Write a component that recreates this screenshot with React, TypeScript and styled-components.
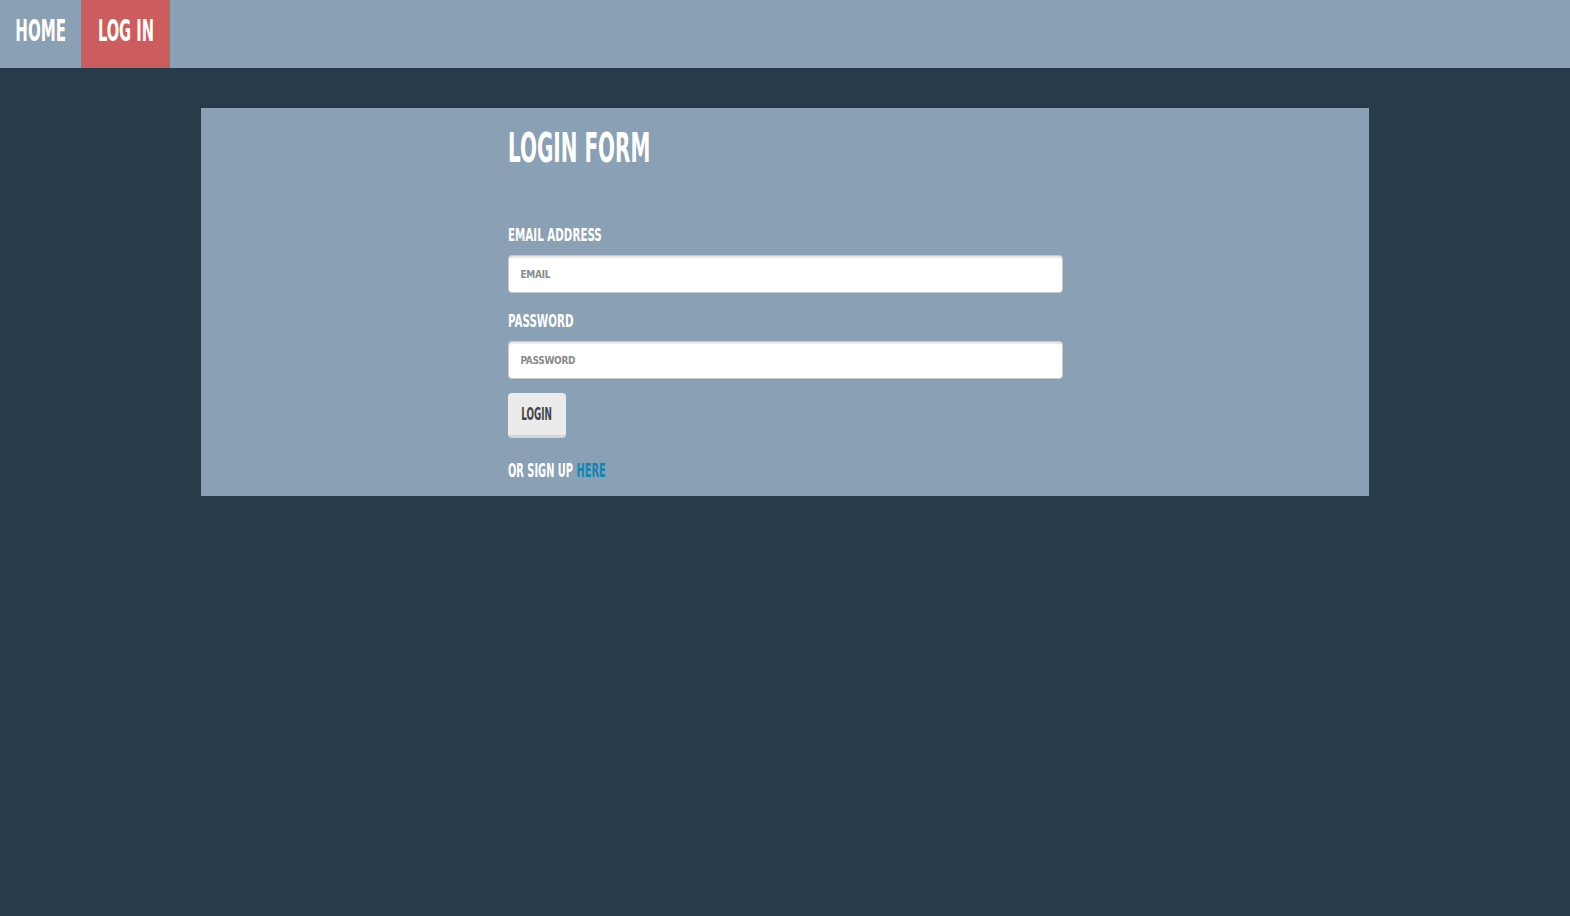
import React from "react";
import styled, { createGlobalStyle } from "styled-components";

const FONT = `"DejaVu Sans Condensed", "DejaVu Sans", sans-serif`;

const Global = createGlobalStyle`
  html, body { margin: 0; padding: 0; background: #283b4b; }
  body { font-family: ${FONT}; min-height: 916px; }
  * { box-sizing: border-box; }
`;

const Page = styled.div`
  min-height: 916px;
  background: #283b4b;
  display: flex;
  flex-direction: column;
`;

const NavBar = styled.nav`
  height: 68px;
  background: #8aa0b5;
  display: flex;
`;

const NavLink = styled.a<{ $w: number; $active?: boolean }>`
  width: ${(p) => p.$w}px;
  height: 68px;
  padding-top: 16px;
  display: flex;
  justify-content: center;
  align-items: flex-start;
  background: ${(p) => (p.$active ? "#cd5c5e" : "transparent")};
  color: #fff;
  text-decoration: none;
  font-weight: 700;
  font-size: 30.2px;
  line-height: 30.2px;
  cursor: pointer;
`;

const Squeeze = styled.span<{ $s?: number; $origin?: string }>`
  display: inline-block;
  white-space: nowrap;
  transform: scaleX(${(p) => p.$s ?? 0.57});
  transform-origin: ${(p) => p.$origin ?? "left center"};
`;

const Card = styled.main`
  width: 1168px;
  margin: 40px auto 0;
  background: #8aa0b5;
  padding: 18px 0 14px;
  display: flex;
  justify-content: center;
`;

const Column = styled.form`
  width: 555px;
  display: flex;
  flex-direction: column;
  align-items: flex-start;
`;

const Title = styled.h1`
  margin: 0 0 55px;
  color: #fff;
  font-size: 40px;
  line-height: 44px;
  font-weight: 700;
`;

const Label = styled.label`
  display: block;
  color: #fff;
  font-size: 18.5px;
  line-height: 20px;
  font-weight: 700;
  margin-bottom: 10px;
`;

const Input = styled.input`
  width: 555px;
  height: 38px;
  border: 1px solid #c9c9c9;
  border-radius: 4px;
  background: #fff;
  box-shadow: inset 0 2px 1px rgba(0, 0, 0, 0.09);
  padding: 0 12px;
  font-family: ${FONT};
  font-weight: 700;
  font-size: 10px;
  letter-spacing: -0.3px;
  color: #555;
  outline: none;
  margin-bottom: 18px;
  &::placeholder {
    color: #8a8a8a;
  }
  &:last-of-type {
    margin-bottom: 14px;
  }
`;

const Button = styled.button`
  width: 58px;
  height: 45px;
  border: none;
  border-bottom: 3px solid #d6d6d6;
  border-radius: 4px;
  background: #ebebeb;
  color: #444;
  font-family: ${FONT};
  font-weight: 700;
  font-size: 17px;
  line-height: 17px;
  display: flex;
  align-items: center;
  justify-content: center;
  padding: 0;
  margin-bottom: 22px;
  cursor: pointer;
`;

const SignUp = styled.p`
  margin: 0;
  color: #fff;
  font-size: 19.2px;
  line-height: 22px;
  font-weight: 700;
`;

const Here = styled.a`
  color: #1186b6;
  text-decoration: none;
`;

export default function App() {
  return (
    <Page>
      <Global />
      <NavBar>
        <NavLink $w={81}>
          <Squeeze $s={0.555} $origin="center">HOME</Squeeze>
        </NavLink>
        <NavLink $w={89} $active>
          <Squeeze $s={0.54} $origin="center">LOG IN</Squeeze>
        </NavLink>
      </NavBar>
      <Card>
        <Column onSubmit={(e) => e.preventDefault()}>
          <Title>
            <Squeeze $s={0.555}>LOGIN FORM</Squeeze>
          </Title>
          <Label htmlFor="email">
            <Squeeze $s={0.62}>EMAIL ADDRESS</Squeeze>
          </Label>
          <Input id="email" type="email" placeholder="EMAIL" />
          <Label htmlFor="password">
            <Squeeze $s={0.62}>PASSWORD</Squeeze>
          </Label>
          <Input id="password" type="password" placeholder="PASSWORD" />
          <Button type="submit">
            <Squeeze $s={0.578} $origin="center">LOGIN</Squeeze>
          </Button>
          <SignUp>
            <Squeeze $s={0.57}>
              OR SIGN UP <Here href="#">HERE</Here>
            </Squeeze>
          </SignUp>
        </Column>
      </Card>
    </Page>
  );
}
